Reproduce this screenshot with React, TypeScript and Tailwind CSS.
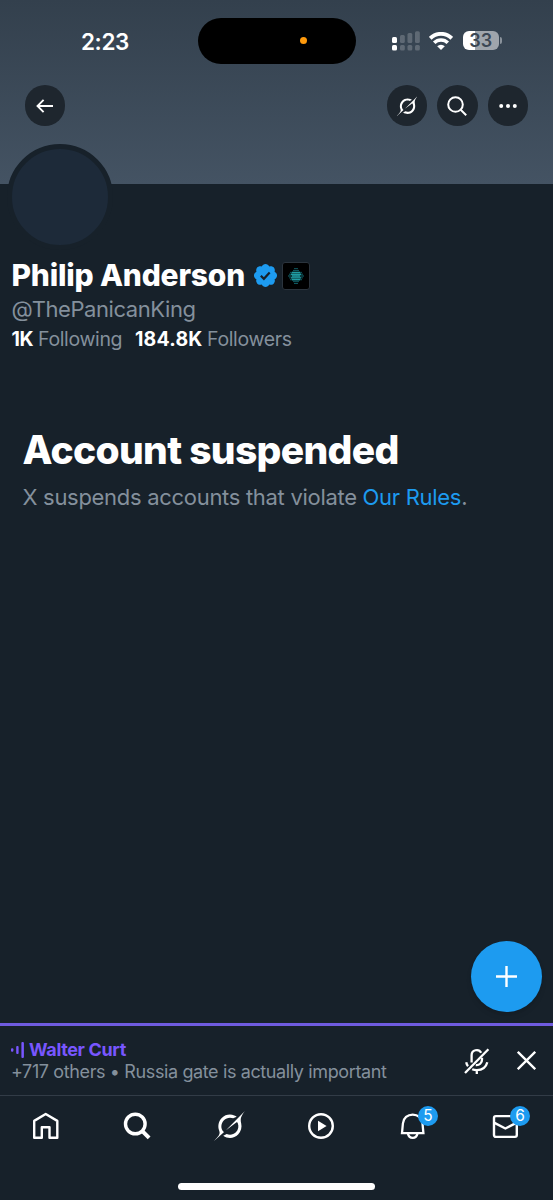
import type { ReactNode } from "react";

const GROK_PATH =
  "M12.745 20.54l10.97-8.19c.539-.4 1.307-.244 1.564.38 1.349 3.288.746 7.241-1.938 9.955-2.683 2.714-6.417 3.31-9.83 1.954l-3.728 1.745c5.347 3.697 11.84 2.782 15.898-1.324 3.219-3.255 4.216-7.692 3.284-11.693l.008.009c-1.351-5.878.332-8.227 3.782-13.031L33 0l-4.54 4.59v-.014L12.743 20.544m-2.263 1.987c-3.837-3.707-3.175-9.446.1-12.755 2.42-2.449 6.388-3.448 9.852-1.979l3.72-1.737c-.67-.49-1.53-1.017-2.515-1.387-4.455-1.854-9.789-.931-13.41 2.728-3.483 3.523-4.579 8.94-2.697 13.561 1.405 3.454-.899 5.898-3.22 8.364C1.49 30.2.666 31.074 0 32l10.478-9.466";

const VERIFIED_PATH =
  "M20.396 11c-.018-.646-.215-1.275-.57-1.816-.354-.54-.852-.972-1.438-1.246.223-.607.27-1.264.14-1.897-.131-.634-.437-1.218-.882-1.687-.47-.445-1.053-.75-1.687-.882-.633-.13-1.29-.083-1.897.14-.273-.587-.704-1.086-1.245-1.44S11.647 1.62 11 1.604c-.646.017-1.273.213-1.813.568s-.969.854-1.24 1.44c-.608-.223-1.267-.272-1.902-.14-.635.13-1.22.436-1.69.882-.445.47-.749 1.055-.878 1.688-.13.633-.08 1.29.144 1.896-.587.274-1.087.705-1.443 1.245-.356.54-.555 1.17-.574 1.817.02.647.218 1.276.574 1.817.356.54.856.972 1.443 1.245-.224.606-.274 1.263-.144 1.896.13.634.433 1.218.877 1.688.47.443 1.054.747 1.687.878.633.132 1.29.084 1.897-.136.274.586.705 1.084 1.246 1.439.54.354 1.17.551 1.816.569.647-.016 1.276-.213 1.817-.567s.972-.854 1.245-1.44c.604.239 1.266.296 1.903.164.636-.132 1.22-.447 1.68-.907.46-.46.776-1.044.908-1.681s.075-1.299-.165-1.903c.586-.274 1.084-.705 1.439-1.246.354-.54.551-1.17.569-1.816z";

const Grok = ({ className }: { className: string }) => (
  <svg viewBox="0 0 33 32" className={className} fill="currentColor">
    <path d={GROK_PATH} />
  </svg>
);

const RoundButton = ({ label, children }: { label: string; children: ReactNode }) => (
  <button
    aria-label={label}
    className="flex size-[40.4px] items-center justify-center rounded-full bg-[#1e262e]"
  >
    {children}
  </button>
);

const StatusBar = () => (
  <div className="flex h-[63px] items-start pt-[17.5px]">
    <div className="w-[197.5px] pl-[81px] text-[22.5px] leading-[47px] font-semibold tracking-[-0.4px]">
      2:23
    </div>
    <div className="flex h-[46px] w-[158px] items-center rounded-full bg-black pl-[102px]">
      <span className="size-[7.5px] rounded-full bg-[#ff9a0c]" />
    </div>
    <div className="ml-[36.5px] flex h-[46px] items-center">
      <svg className="h-[20px] w-[28px]" viewBox="0 0 28 20" fill="#fff">
        <rect x="0" y="6" width="5" height="6" rx="1.5" />
        <rect x="0" y="14" width="5" height="5.5" rx="1.5" />
        <g opacity=".2">
          <rect x="8" y="4" width="4.8" height="8" rx="1.5" />
          <rect x="15.5" y="2" width="4.8" height="10" rx="1.5" />
          <rect x="23" y="0.3" width="4.8" height="11.7" rx="1.5" />
          <rect x="8" y="14" width="4.8" height="5.5" rx="1.5" />
          <rect x="15.5" y="14" width="4.8" height="5.5" rx="1.5" />
          <rect x="23" y="14" width="4.8" height="5.5" rx="1.5" />
        </g>
      </svg>
      <svg className="ml-[9px] h-[18px] w-[24px]" viewBox="0 0 24 18" fill="none" stroke="#fff">
        <path d="M1.2 6.3a15.3 15.3 0 0 1 21.6 0" strokeWidth="3.9" />
        <path d="M5.2 10.7a9.6 9.6 0 0 1 13.6 0" strokeWidth="3.5" />
        <path d="M12 18l-3.8-3.8a5.4 5.4 0 0 1 7.6 0z" fill="#fff" stroke="none" />
      </svg>
      <div className="ml-[10px] flex h-[19.5px] w-[35.5px] items-center justify-center rounded-[6px] bg-[linear-gradient(90deg,#fff_34%,#9fa5ac_34%)] text-[18px] leading-none font-semibold text-[#3b4754]">
        33
      </div>
      <div className="ml-[1px] h-[7px] w-[2.5px] rounded-r-full bg-[#8a929b]" />
    </div>
  </div>
);

const Banner = () => (
  <header className="h-[184px] bg-linear-to-b from-[#33404d] to-[#445363]">
    <StatusBar />
    <div className="flex items-center px-[25px] pt-[22.4px]">
      <RoundButton label="Back">
        <svg className="h-[14px] w-[18px]" viewBox="0 0 18 14" fill="none" stroke="#fff" strokeWidth="1.9">
          <path d="M7.6 .8L1.5 7l6.1 6.2M1.8 7H17" />
        </svg>
      </RoundButton>
      <div className="ml-auto flex gap-[10px]">
        <RoundButton label="Grok">
          <Grok className="h-[20px] w-[20.5px]" />
        </RoundButton>
        <RoundButton label="Search">
          <svg className="size-[20px]" viewBox="0 0 20 20" fill="none" stroke="#fff" strokeWidth="2">
            <circle cx="8.5" cy="8.5" r="7.3" />
            <path d="M13.7 13.7l5.5 5.5" />
          </svg>
        </RoundButton>
        <RoundButton label="More">
          <svg className="h-[4px] w-[18px]" viewBox="0 0 18 4" fill="#fff">
            <circle cx="2.2" cy="2" r="2" />
            <circle cx="9" cy="2" r="2" />
            <circle cx="15.8" cy="2" r="2" />
          </svg>
        </RoundButton>
      </div>
    </div>
  </header>
);

// rows of the affiliate badge: dots per row, top to bottom
const DOT_ROWS = [2, 3, 6, 7, 8, 7, 6, 3, 2];

const AffiliateBadge = () => (
  <svg className="ml-[3px] size-[28px]" viewBox="0 0 28 28">
    <rect x=".5" y=".5" width="27" height="27" rx="2.5" fill="#000" stroke="#2b343d" />
    {DOT_ROWS.map((count, row) =>
      Array.from({ length: count }, (_, i) => {
        const x = 14 + (i - (count - 1) / 2) * 2;
        const y = 14 + (row - 4) * 1.85;
        const inner = Math.hypot(x - 14, y - 14) < 4.8;
        return (
          <circle
            key={`${row}-${i}`}
            cx={x}
            cy={y}
            r={inner ? 0.9 : 0.65}
            fill={inner ? "#27c3cc" : "#1b9ba6"}
          />
        );
      })
    )}
  </svg>
);

const Profile = () => (
  <section className="relative h-[166px] px-[11.5px] pt-[76px]">
    <div className="absolute top-[-40px] left-[6.5px] size-[106px] rounded-full border-5 border-[#17212a] bg-[#1d2a39]" />
    <div className="flex h-[31px] items-center">
      <h1 className="w-[240.5px] text-[30px] leading-[31px] font-extrabold tracking-[-0.2px] whitespace-nowrap">
        Philip Anderson
      </h1>
      <svg className="size-[27px]" viewBox="0 0 22 22">
        <path d={VERIFIED_PATH} fill="#1d9bf0" />
        <path d="M7.2 11.2l2.5 2.5 4.7-5.1" fill="none" stroke="#17212a" strokeWidth="1.8" />
      </svg>
      <AffiliateBadge />
    </div>
    <p className="text-[22px] leading-[37px] tracking-[-0.42px] text-[#84909c]">@ThePanicanKing</p>
    <div className="flex text-[19.5px] leading-[22px] tracking-[-0.35px] text-[#84909c]">
      <b className="w-[26.5px] tracking-[-0.5px] text-white">1K</b>
      <span className="w-[97px]">Following</span>
      <b className="w-[72px] tracking-[0.2px] text-white">184.8K</b>
      <span>Followers</span>
    </div>
  </section>
);

const SpaceDock = () => (
  <div className="flex h-[72px] items-center border-t-3 border-[#6f5bdf] pr-[17px] pl-[11px]">
    <div className="whitespace-nowrap">
      <div className="flex h-[22px] items-center text-[18px] leading-[22px] font-bold tracking-[-0.35px] text-[#7856ff]">
        <svg className="mr-[5px] h-[16px] w-[13px]" viewBox="0 0 13 16" fill="currentColor">
          <rect x="0" y="6.3" width="2.4" height="3.4" rx="1" />
          <rect x="5.2" y="4" width="2.4" height="8" rx="1" />
          <rect x="10.4" y="0" width="2.5" height="16" rx="1" />
        </svg>
        Walter Curt
      </div>
      <p className="text-[18px] leading-[21px] tracking-[-0.38px] text-[#84909c]">
        +717 others • Russia gate is actually important
      </p>
    </div>
    <div className="ml-auto flex items-center gap-[27px]">
      <svg className="size-[26px]" viewBox="0 0 26 26" fill="none" stroke="#fff" strokeWidth="2.3">
        <path d="M7.6 14.5V7.2a5.1 5.1 0 0 1 9.6-2.4" />
        <path d="M18 9.8v1.7a5.4 5.4 0 0 1-6.2 5.6" />
        <path d="M2.2 14.3c.3 1.7.9 2.9 1.8 3.9M23.3 14.3c-1.2 4.9-5.2 7.8-10.5 7.8-1.8 0-3.3-.3-4.6-.9M12.8 22.1v3.9" />
        <path d="M1 25L24.4 1.2" />
      </svg>
      <svg className="size-[19px]" viewBox="0 0 19 19" stroke="#fff" strokeWidth="2.3">
        <path d="M.8 .8l17.4 17.4M18.2 .8L.8 18.2" />
      </svg>
    </div>
  </div>
);

const Badge = ({ count }: { count: number }) => (
  <span className="absolute top-[-4px] left-[21px] flex size-[20px] items-center justify-center rounded-full bg-[#1d9bf0] text-[15.5px] leading-none">
    {count}
  </span>
);

const TabBar = () => (
  <nav className="h-[105px] border-t border-[#323c47]">
    <div className="flex h-[60px] items-center justify-between pr-[32px] pl-[30px]">
      <svg className="size-[32px]" viewBox="0 0 32 32" fill="none" stroke="#fff" strokeWidth="2.4">
        <path d="M4.2 10.9L15.7 4l11.6 6.9v16.8h-7.8V17.2h-7.7v10.5H4.2z" strokeLinejoin="round" />
      </svg>
      <svg className="size-[32px]" viewBox="0 0 32 32" fill="none" stroke="#fff" strokeWidth="3.4">
        <circle cx="13.3" cy="14" r="9.8" />
        <path d="M20.1 20.8l7 7" strokeWidth="4" />
      </svg>
      <Grok className="h-[30px] w-[31px]" />
      <svg className="size-[32px]" viewBox="0 0 32 32" fill="none" stroke="#fff" strokeWidth="2.4">
        <circle cx="16" cy="16" r="11.8" />
        <path d="M13 10.8v10.4l8.6-5.2z" fill="#fff" stroke="none" />
      </svg>
      <div className="relative">
        <svg className="size-[32px]" viewBox="0 0 32 32" fill="none" stroke="#fff" strokeWidth="2.3">
          <path d="M5 23.1l.9-9.6C6.4 8 10.6 4.6 15.7 4.6S25 8 25.5 13.5l.9 9.6z" />
          <path d="M10.9 23.5c.6 2.9 2.3 4.3 4.8 4.3s4.2-1.4 4.8-4.3" />
        </svg>
        <Badge count={5} />
      </div>
      <div className="relative">
        <svg className="size-[32px]" viewBox="0 0 32 32" fill="none" stroke="#fff" strokeWidth="2.4">
          <rect x="5" y="6.1" width="22.8" height="20.8" rx="1.8" />
          <path d="M5 12.6l11.4 5.9 11.4-5.9" />
        </svg>
        <Badge count={6} />
      </div>
    </div>
    <div className="mx-auto mt-[27px] h-[7px] w-[197px] rounded-full bg-white" />
  </nav>
);

export default function App() {
  return (
    <div className="relative flex h-[1200px] w-[553px] flex-col overflow-hidden bg-[#17212a] font-['Inter',sans-serif] text-white">
      <Banner />
      <Profile />
      <main className="flex-1 px-[22.5px] pt-[75px] whitespace-nowrap">
        <h2 className="text-[39px] leading-[50px] font-extrabold tracking-[-0.7px]">
          Account suspended
        </h2>
        <p className="text-[22px] leading-[45px] tracking-[-0.3px] text-[#84909c]">
          X suspends accounts that violate <a className="text-[#1d9bf0]">Our Rules</a>.
        </p>
      </main>
      <button
        aria-label="New post"
        className="absolute top-[941px] right-[11.5px] flex size-[70.5px] items-center justify-center rounded-full bg-[#1d9bf0] shadow-md"
      >
        <svg className="size-[21px]" viewBox="0 0 21 21" stroke="#fff" strokeWidth="2.4">
          <path d="M10.5 0v21M0 10.5h21" />
        </svg>
      </button>
      <SpaceDock />
      <TabBar />
    </div>
  );
}
